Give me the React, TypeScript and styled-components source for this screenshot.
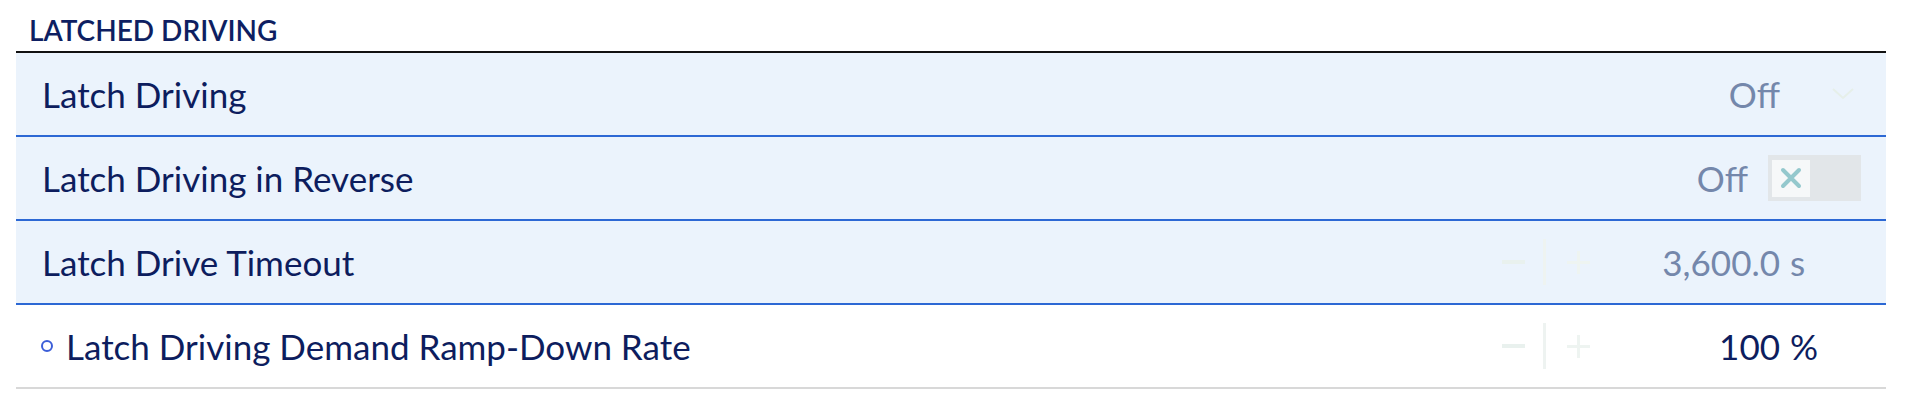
import React from "react";
import styled, { createGlobalStyle } from "styled-components";

const GlobalStyle = createGlobalStyle`
  body {
    margin: 0;
    background: #ffffff;
    font-family: Lato, "Open Sans", "Liberation Sans", sans-serif;
  }
`;

const Page = styled.div`
  padding: 0 36px 0 16px;
`;

const SectionTitle = styled.div`
  padding: 15px 0 5px 13px;
  font-size: 28px;
  font-weight: 600;
  line-height: 31px;
  color: #0e1f62;
  border-bottom: 2px solid #111111;
`;

const Row = styled.div<{ $shaded?: boolean; $last?: boolean }>`
  display: flex;
  align-items: center;
  justify-content: space-between;
  height: 82px;
  padding-left: 26px;
  background: ${(p) => (p.$shaded ? "#ebf3fc" : "#ffffff")};
  border-bottom: 2px solid ${(p) => (p.$last ? "#d8d8d8" : "#2c68d4")};
`;

const Label = styled.div`
  display: flex;
  align-items: center;
  font-size: 35px;
  color: #0d1d5e;
`;

const Bullet = styled.span`
  width: 8px;
  height: 8px;
  border: 2px solid #3c5ed8;
  border-radius: 50%;
  margin: 0 13px 0 -1px;
`;

const Controls = styled.div`
  display: flex;
  align-items: center;
`;

const Value = styled.div<{ $muted?: boolean; $width?: number }>`
  width: ${(p) => (p.$width ? `${p.$width}px` : "auto")};
  text-align: right;
  font-size: 35px;
  color: ${(p) => (p.$muted ? "#7487ab" : "#0d1d5e")};
`;

const Trail = styled.div`
  width: 106px;
  display: flex;
  align-items: center;
  font-size: 35px;
`;

const Unit = styled.span<{ $muted?: boolean }>`
  padding-left: 10px;
  color: ${(p) => (p.$muted ? "#7487ab" : "#0d1d5e")};
`;

const Chevron = styled.svg`
  margin-left: 52px;
`;

const Toggle = styled.div`
  width: 93px;
  height: 46px;
  margin: 0 25px 0 20px;
  box-sizing: border-box;
  padding: 4px;
  background: #e2e6e9;
  display: flex;
  align-items: center;
`;

const Knob = styled.div`
  width: 38px;
  height: 37px;
  background: #f6f8f9;
  display: flex;
  align-items: center;
  justify-content: center;
`;

const Stepper = styled.div`
  display: flex;
  align-items: center;
`;

const StepButton = styled.div`
  width: 44px;
  display: flex;
  justify-content: center;
`;

const StepDivider = styled.div`
  width: 3px;
  height: 46px;
  margin: 0 10px 0 8px;
  background: #eef3f1;
`;

const StepperControl = () => (
  <Stepper>
    <StepButton>
      <svg width="23" height="4" viewBox="0 0 23 4">
        <rect width="23" height="4" fill="#e9f1ee" />
      </svg>
    </StepButton>
    <StepDivider />
    <StepButton>
      <svg width="23" height="23" viewBox="0 0 23 23">
        <rect x="0" y="10" width="23" height="3" fill="#eef4f1" />
        <rect x="10" y="0" width="3" height="23" fill="#eef4f1" />
      </svg>
    </StepButton>
  </Stepper>
);

const App = () => {
  return (
    <Page>
      <GlobalStyle />
      <SectionTitle>LATCHED DRIVING</SectionTitle>

      <Row $shaded>
        <Label>Latch Driving</Label>
        <Controls>
          <Value $muted>Off</Value>
          <Trail>
            <Chevron width="22" height="12" viewBox="0 0 22 12">
              <polyline points="1,1 11,10 21,1" fill="none" stroke="#e6efe9" strokeWidth="2" />
            </Chevron>
          </Trail>
        </Controls>
      </Row>

      <Row $shaded>
        <Label>Latch Driving in Reverse</Label>
        <Controls>
          <Value $muted>Off</Value>
          <Toggle>
            <Knob>
              <svg width="22" height="22" viewBox="0 0 22 22">
                <path d="M3 3 L19 19 M19 3 L3 19" stroke="#94c8cd" strokeWidth="4" strokeLinecap="round" />
              </svg>
            </Knob>
          </Toggle>
        </Controls>
      </Row>

      <Row $shaded>
        <Label>Latch Drive Timeout</Label>
        <Controls>
          <StepperControl />
          <Value $muted $width={180}>3,600.0</Value>
          <Trail>
            <Unit $muted>s</Unit>
          </Trail>
        </Controls>
      </Row>

      <Row $last>
        <Label>
          <Bullet />
          Latch Driving Demand Ramp-Down Rate
        </Label>
        <Controls>
          <StepperControl />
          <Value $width={180}>100</Value>
          <Trail>
            <Unit>%</Unit>
          </Trail>
        </Controls>
      </Row>
    </Page>
  );
};

export default App;
